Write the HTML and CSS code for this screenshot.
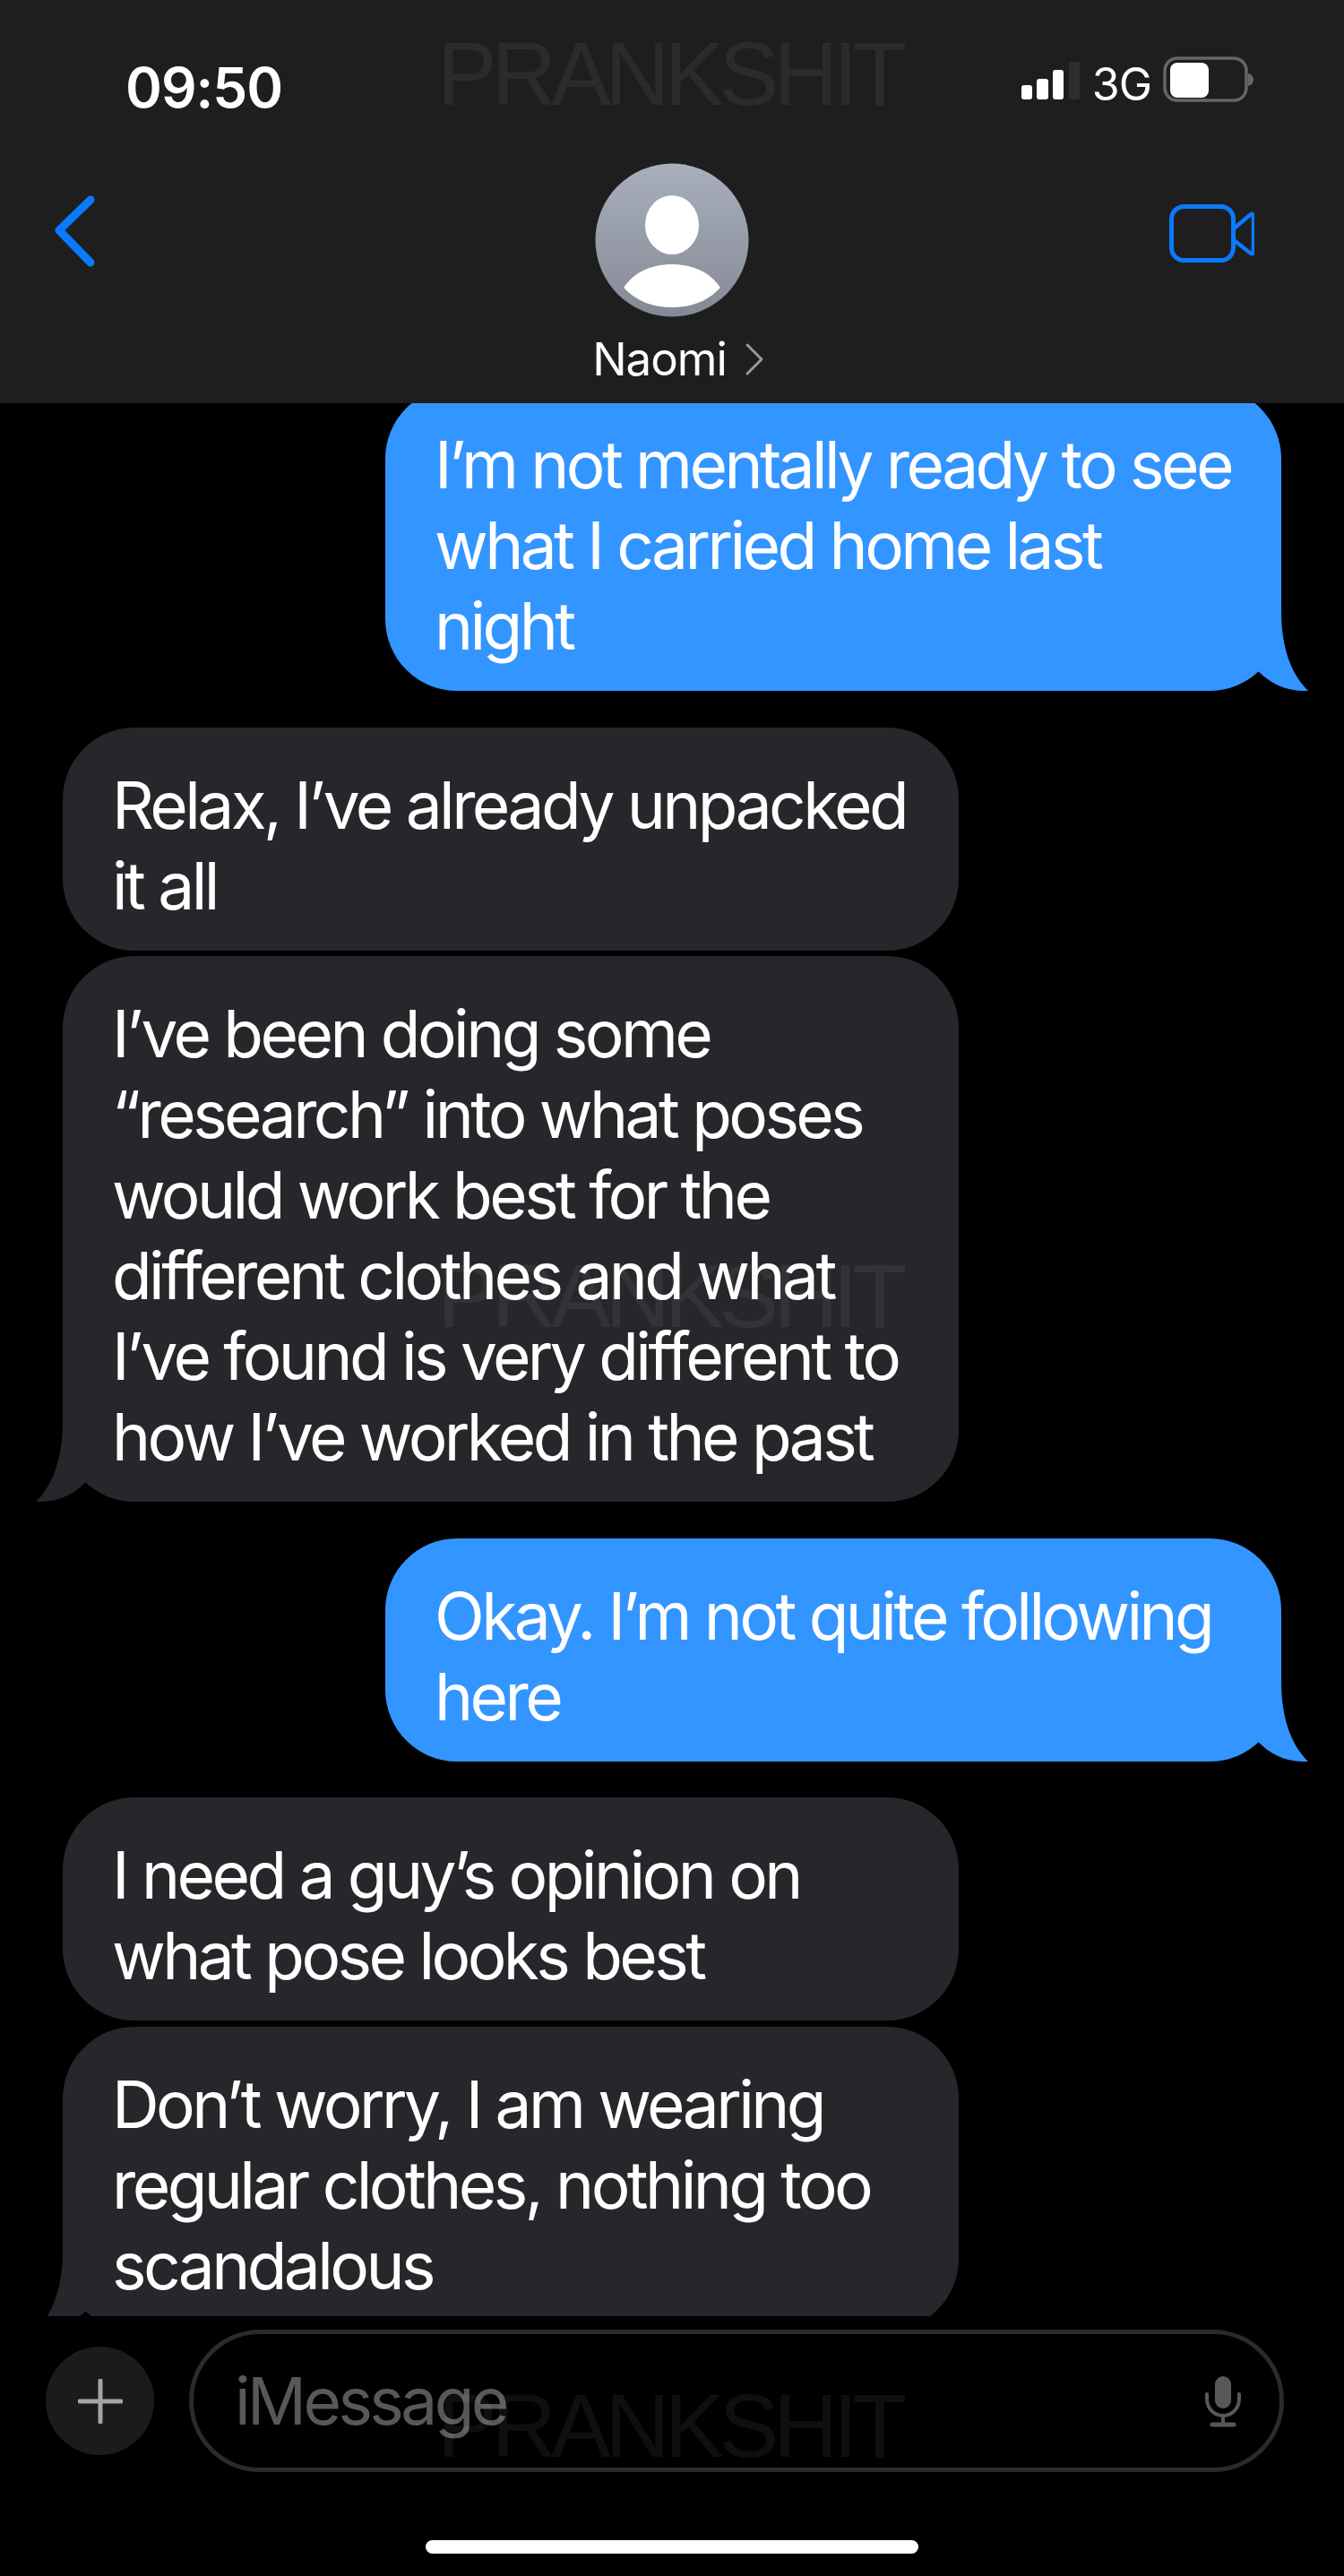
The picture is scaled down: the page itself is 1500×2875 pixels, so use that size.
FILE: index.html
```html
<!DOCTYPE html>
<html lang="en">
<head>
    <meta charset="UTF-8">
    <title>Naomi</title>
    <link rel="stylesheet" href="styles.css">
</head>
<body>
    <div id="phone">
        <div class="topbar">
            <div class="status">
                <div class="time">09:50</div>
                <div class="status-right">
                    <svg class="signal" width="66" height="44" viewBox="0 0 66 44">
                        <rect x="0" y="26" width="12" height="16" rx="3" fill="#fff"/>
                        <rect x="17" y="19" width="13" height="23" rx="3" fill="#fff"/>
                        <rect x="35" y="9" width="12" height="33" rx="3" fill="#fff"/>
                        <rect x="53" y="0" width="12" height="42" rx="3" fill="#2e2e2e"/>
                    </svg>
                    <span class="net">3G</span>
                    <svg class="battery" width="102" height="52" viewBox="0 0 102 52">
                        <rect x="2" y="2" width="91" height="47" rx="14" fill="none" stroke="#666" stroke-width="3.5"/>
                        <rect x="8" y="7" width="43" height="39" rx="8" fill="#fff"/>
                        <path d="M95 19c4 1 6 4 6 7s-2 6-6 7z" fill="#666"/>
                    </svg>
                </div>
            </div>
            <div class="nav">
                <svg class="back" width="50" height="80" viewBox="0 0 50 80">
                    <path d="M41 5 L6 39 L41 75" fill="none" stroke="#0a7aff" stroke-width="9" stroke-linecap="round" stroke-linejoin="round"/>
                </svg>
                <div class="contact">
                    <svg class="avatar" width="172" height="172" viewBox="0 0 172 172">
                        <defs>
                            <linearGradient id="av" x1="0" y1="0" x2="0" y2="1">
                                <stop offset="0" stop-color="#a9afbd"/>
                                <stop offset="1" stop-color="#858995"/>
                            </linearGradient>
                        </defs>
                        <circle cx="86" cy="86" r="85.5" fill="url(#av)"/>
                        <ellipse cx="86" cy="69" rx="30" ry="33" fill="#fff"/>
                        <path d="M32 139 C44 121 64 113 86 113 C108 113 128 121 140 139 C126 154 108 161 86 161 C64 161 46 154 32 139Z" fill="#fff"/>
                    </svg>
                    <div class="name">Naomi
                        <svg class="name-arrow" width="22" height="38" viewBox="0 0 22 38">
                            <path d="M3 3 L19 19 L3 35" fill="none" stroke="#999" stroke-width="3" stroke-linecap="round" stroke-linejoin="round"/>
                        </svg>
                    </div>
                </div>
                <svg class="video" width="100" height="66" viewBox="0 0 100 66">
                    <rect x="7.5" y="2.5" width="69" height="60" rx="14" fill="none" stroke="#0a7aff" stroke-width="5"/>
                    <path d="M77 27 L95 12 Q99 9 99 14 L99 52 Q99 57 95 54 L77 40" fill="none" stroke="#0a7aff" stroke-width="4.5" stroke-linejoin="round"/>
                </svg>
            </div>
        </div>

        <div class="chat">
            <div class="msg sent tail first">I’m not mentally ready to see<br>what I carried home last<br>night
                <svg class="tail-shape" width="120" height="90" viewBox="0 0 120 90"><path d="M90 0 C90 40 100 70 120 90 C95 91 78 82 63 67 L40 20 Z" fill="#3395ff"/></svg>
            </div>
            <div class="msg got near-next">Relax, I’ve already unpacked<br>it all</div>
            <div class="msg got tail">I’ve been doing some<br>“research” into what poses<br>would work best for the<br>different clothes and what<br>I’ve found is very different to<br>how I’ve worked in the past
                <svg class="tail-shape" width="120" height="90" viewBox="0 0 120 90"><path d="M90 0 C90 40 100 70 120 90 C95 91 78 82 63 67 L40 20 Z" fill="#26262b"/></svg>
            </div>
            <div class="msg sent tail">Okay. I’m not quite following<br>here
                <svg class="tail-shape" width="120" height="90" viewBox="0 0 120 90"><path d="M90 0 C90 40 100 70 120 90 C95 91 78 82 63 67 L40 20 Z" fill="#3395ff"/></svg>
            </div>
            <div class="msg got near-next">I need a guy’s opinion on<br>what pose looks best</div>
            <div class="msg got tail">Don’t worry, I am wearing<br>regular clothes, nothing too<br>scandalous
                <svg class="tail-shape" width="120" height="90" viewBox="0 0 120 90"><path d="M90 0 C90 40 100 70 120 90 C95 91 78 82 63 67 L40 20 Z" fill="#26262b"/></svg>
            </div>
        </div>

        <div class="bottom">
            <div class="composer">
                <div class="plus">
                    <svg width="50" height="50" viewBox="0 0 50 50">
                        <path d="M25 2 V48 M2 25 H48" stroke="#a5a5a5" stroke-width="5" stroke-linecap="round"/>
                    </svg>
                </div>
                <div class="input">
                    <span class="placeholder">iMessage</span>
                    <svg class="mic" width="42" height="58" viewBox="0 0 42 58">
                        <rect x="12" y="1" width="18" height="36" rx="9" fill="#58585a"/>
                        <path d="M3 21 V26 C3 37 11 45 21 45 C31 45 39 37 39 26 V21" fill="none" stroke="#58585a" stroke-width="4" stroke-linecap="round"/>
                        <path d="M21 45 V54" stroke="#58585a" stroke-width="4"/>
                        <path d="M9 55 H33" stroke="#58585a" stroke-width="5" stroke-linecap="round"/>
                    </svg>
                </div>
            </div>
            <div class="home-bar"></div>
        </div>

        <div class="mark mark-top">PRANKSHIT</div>
        <div class="mark mark-mid">PRANKSHIT</div>
        <div class="mark mark-bottom">PRANKSHIT</div>
    </div>
</body>
</html>
```

FILE: styles.css
```css
* {
    box-sizing: border-box;
}

body {
    margin: 0;
    background-color: black;
    color: #fff;
    font-family: "Inter", "Liberation Sans", sans-serif;
}

#phone {
    position: relative;
    width: 1500px;
    height: 2875px;
    display: flex;
    flex-direction: column;
    overflow: hidden;
    background-color: black;
}

/* header */
.topbar {
    height: 450px;
    background-color: #1e1e1e;
    flex: none;
    padding-top: 60px;
}

.status {
    display: flex;
    justify-content: space-between;
    align-items: flex-start;
    padding: 0 100px 0 140px;
}

.time {
    font-size: 62px;
    font-weight: 600;
    line-height: 74px;
    letter-spacing: -1px;
    margin-top: 1px;
}

.status-right {
    display: flex;
    align-items: flex-start;
}

.signal {
    margin-top: 9px;
}

.net {
    font-size: 50px;
    line-height: 58px;
    margin-left: 13px;
    margin-top: 5px;
    letter-spacing: -1px;
}

.battery {
    margin-left: 13px;
    margin-top: 3px;
}

.nav {
    display: grid;
    grid-template-columns: 1fr auto 1fr;
    padding: 47px 100px 0;
}

.back {
    margin-top: 36px;
    margin-left: -40px;
}

.contact {
    display: flex;
    flex-direction: column;
    align-items: center;
}

.name {
    display: flex;
    align-items: center;
    font-size: 51px;
    line-height: 62px;
    margin-top: 16px;
    letter-spacing: -1px;
    margin-left: 14px;
}

.name-arrow {
    margin-left: 20px;
}

.video {
    justify-self: end;
    margin-top: 46px;
}

/* messages */
.chat {
    flex: none;
    height: 2135px;
    overflow: hidden;
    display: flex;
    flex-direction: column;
    padding: 0 70px;
}

.msg {
    position: relative;
    width: 1000px;
    flex: none;
    padding: 42px 20px 27px 55px;
    border-radius: 80px;
    font-size: 73px;
    line-height: 90px;
    letter-spacing: -3.6px;
    margin-bottom: 40.5px;
    background-color: #26262b;
}

.msg.first {
    margin-top: -18px;
}

.msg.near-next {
    margin-bottom: 6.5px;
}

.sent {
    align-self: flex-end;
    background-color: #3395ff;
}

.got {
    align-self: flex-start;
}

.tail-shape {
    position: absolute;
    bottom: 0;
    right: -30px;
}

.got .tail-shape {
    right: auto;
    left: -30px;
    transform: scaleX(-1);
}

/* bottom bar */
.bottom {
    flex: none;
    height: 290px;
    display: flex;
    flex-direction: column;
    align-items: center;
}

.composer {
    width: 100%;
    display: flex;
    align-items: center;
    padding: 15px 67px 0 51px;
    gap: 39px;
}

.plus {
    width: 121px;
    height: 121px;
    border-radius: 50%;
    background-color: #1c1a1b;
    display: flex;
    align-items: center;
    justify-content: center;
    flex: none;
}

.input {
    flex: 1;
    height: 159px;
    border: 5px solid #2b2b2d;
    border-radius: 80px;
    display: flex;
    align-items: center;
    justify-content: space-between;
    padding: 0 42px 0 46px;
}

.placeholder {
    font-size: 73px;
    letter-spacing: -3.6px;
    color: #58585c;
}

.home-bar {
    width: 550px;
    height: 15px;
    border-radius: 8px;
    background-color: #fff;
    margin-top: 76px;
}

/* watermark */
.mark {
    position: absolute;
    left: 488px;
    font-family: "Liberation Sans", sans-serif;
    font-size: 100px;
    line-height: 100px;
    letter-spacing: -6px;
    color: rgba(255, 255, 255, 0.06);
    white-space: nowrap;
}

.mark-top {
    top: 32px;
}

.mark-mid {
    top: 1396px;
}

.mark-bottom {
    top: 2657px;
}
```
